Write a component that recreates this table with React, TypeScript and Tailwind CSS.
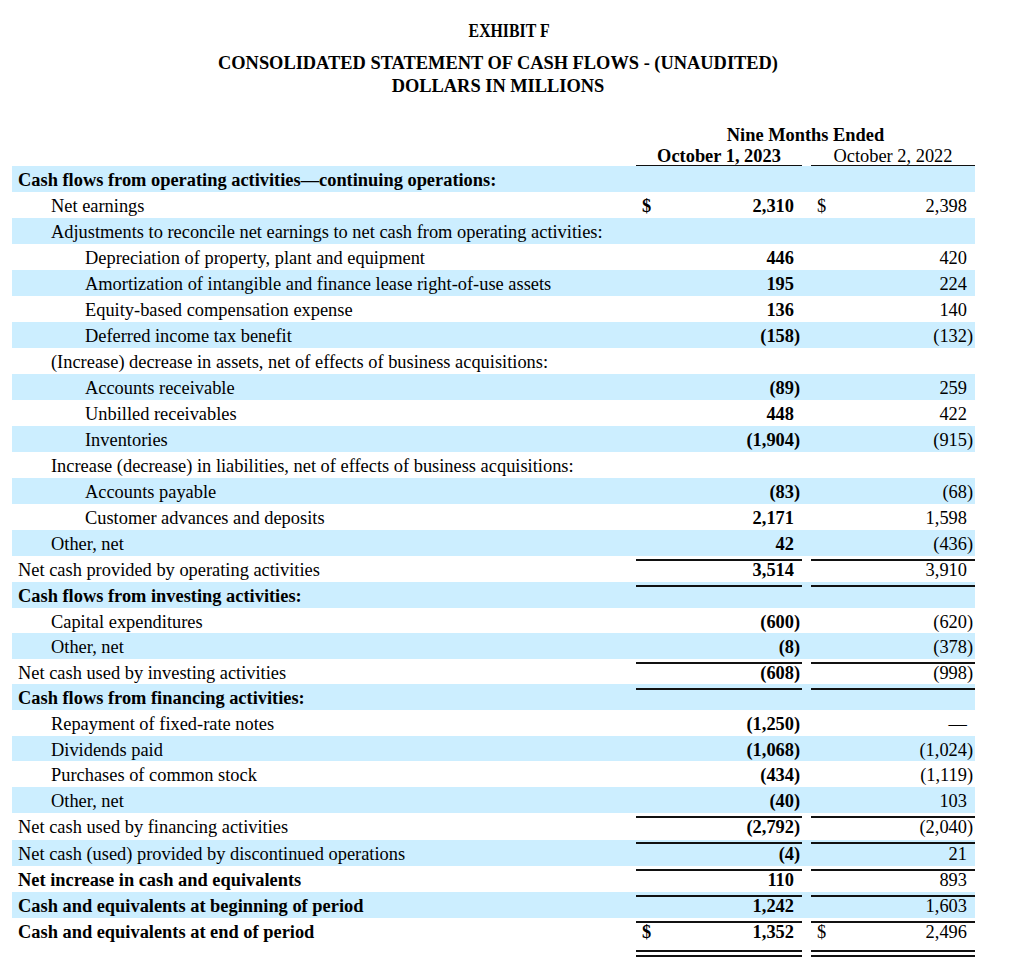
import React from "react";

type Row = {
  label: string;
  indent: 0 | 1 | 2;
  bold?: boolean;
  a?: string;
  b?: string;
  dollar?: boolean;
  line?: "single" | "double";
  h: number;
};

const rows: Row[] = [
  { label: "Cash flows from operating activities\u2014continuing operations:", indent: 0, bold: true, h: 26 },
  { label: "Net earnings", indent: 1, a: "2,310", b: "2,398", dollar: true, h: 26 },
  { label: "Adjustments to reconcile net earnings to net cash from operating activities:", indent: 1, h: 26 },
  { label: "Depreciation of property, plant and equipment", indent: 2, a: "446", b: "420", h: 26 },
  { label: "Amortization of intangible and finance lease right-of-use assets", indent: 2, a: "195", b: "224", h: 26 },
  { label: "Equity-based compensation expense", indent: 2, a: "136", b: "140", h: 26 },
  { label: "Deferred income tax benefit", indent: 2, a: "(158)", b: "(132)", h: 26 },
  { label: "(Increase) decrease in assets, net of effects of business acquisitions:", indent: 1, h: 26 },
  { label: "Accounts receivable", indent: 2, a: "(89)", b: "259", h: 26 },
  { label: "Unbilled receivables", indent: 2, a: "448", b: "422", h: 26 },
  { label: "Inventories", indent: 2, a: "(1,904)", b: "(915)", h: 26 },
  { label: "Increase (decrease) in liabilities, net of effects of business acquisitions:", indent: 1, h: 26 },
  { label: "Accounts payable", indent: 2, a: "(83)", b: "(68)", h: 26 },
  { label: "Customer advances and deposits", indent: 2, a: "2,171", b: "1,598", h: 26 },
  { label: "Other, net", indent: 1, a: "42", b: "(436)", line: "single", h: 26 },
  { label: "Net cash provided by operating activities", indent: 0, a: "3,514", b: "3,910", line: "single", h: 26 },
  { label: "Cash flows from investing activities:", indent: 0, bold: true, h: 26 },
  { label: "Capital expenditures", indent: 1, a: "(600)", b: "(620)", h: 25 },
  { label: "Other, net", indent: 1, a: "(8)", b: "(378)", line: "single", h: 26 },
  { label: "Net cash used by investing activities", indent: 0, a: "(608)", b: "(998)", line: "single", h: 25 },
  { label: "Cash flows from financing activities:", indent: 0, bold: true, h: 26 },
  { label: "Repayment of fixed-rate notes", indent: 1, a: "(1,250)", b: "\u2014", h: 26 },
  { label: "Dividends paid", indent: 1, a: "(1,068)", b: "(1,024)", h: 25 },
  { label: "Purchases of common stock", indent: 1, a: "(434)", b: "(1,119)", h: 26 },
  { label: "Other, net", indent: 1, a: "(40)", b: "103", line: "single", h: 26 },
  { label: "Net cash used by financing activities", indent: 0, a: "(2,792)", b: "(2,040)", line: "single", h: 27 },
  { label: "Net cash (used) provided by discontinued operations", indent: 0, a: "(4)", b: "21", line: "single", h: 26 },
  { label: "Net increase in cash and equivalents", indent: 0, bold: true, a: "110", b: "893", line: "single", h: 26 },
  { label: "Cash and equivalents at beginning of period", indent: 0, bold: true, a: "1,242", b: "1,603", line: "single", h: 26 },
  { label: "Cash and equivalents at end of period", indent: 0, bold: true, a: "1,352", b: "2,496", dollar: true, line: "double", h: 26 },
];

function Value({
  v,
  dollar,
  bold,
  line,
}: {
  v?: string;
  dollar?: boolean;
  bold?: boolean;
  line?: "single" | "double";
}) {
  const neg = v ? v.endsWith(")") : false;
  const body = v ? (neg ? v.slice(0, -1) : v) : "";
  const border =
    line === "single"
      ? "border-b-[2px] border-[#111]"
      : line === "double"
      ? "border-b-[7px] border-double border-[#111]"
      : "";
  return (
    <div
      className={`flex items-start whitespace-nowrap ${bold ? "font-bold" : ""} ${border} ${
        line === "double" ? "h-[calc(100%+3px)]" : "h-full"
      }`}
    >
      <span className="w-[18px] pl-[6px] leading-[29px]">{dollar ? "$" : ""}</span>
      <span className="flex-1 text-right leading-[29px]">{body}</span>
      <span className="w-[6px] leading-[29px]">{neg ? ")" : ""}</span>
      <span className="w-[2px]" />
    </div>
  );
}

export default function App() {
  return (
    <div
      className="min-h-[973px] w-[1024px] bg-white text-[18.4px] text-black"
      style={{ fontFamily: '"Liberation Serif", "Times New Roman", serif' }}
    >
      <div className="w-[996px] pt-[21px] text-center font-bold">
        <div className="pl-[22px] leading-[20px]">
          <span className="inline-block scale-x-[0.86]">EXHIBIT F</span>
        </div>
        <div className="mt-[12px] leading-[20px]">
          CONSOLIDATED STATEMENT OF CASH FLOWS - (UNAUDITED)
        </div>
        <div className="mt-[3px] leading-[20px]">DOLLARS IN MILLIONS</div>
      </div>

      <div className="ml-[12px] mt-[29px] w-[963px]">
        <div className="grid grid-cols-[624px_166px_9px_164px]">
          <div />
          <div className="col-span-3 text-center font-bold leading-[20px]">
            Nine Months Ended
          </div>
        </div>
        <div className="mt-[2px] grid grid-cols-[624px_166px_9px_164px]">
          <div />
          <div className="border-b-[1.5px] border-[#111] text-center font-bold leading-[18px]">
            October 1, 2023
          </div>
          <div />
          <div className="border-b-[1.5px] border-[#111] text-center leading-[18px]">
            October 2, 2022
          </div>
        </div>

        {rows.map((r, i) => {
          const pad =
            r.indent === 0 ? "pl-[6px]" : r.indent === 1 ? "pl-[39px]" : "pl-[73px]";
          return (
            <div
              key={i}
              className={`grid grid-cols-[624px_166px_9px_164px] ${
                i % 2 === 0 ? "bg-[#cceeff]" : ""
              }`}
              style={{ height: r.h }}
            >
              <div
                className={`${pad} whitespace-nowrap leading-[29px] ${
                  r.bold ? "font-bold" : ""
                }`}
              >
                {r.label}
              </div>
              <Value v={r.a} dollar={r.dollar} bold line={r.line} />
              <div />
              <Value v={r.b} dollar={r.dollar} line={r.line} />
            </div>
          );
        })}
      </div>
    </div>
  );
}
